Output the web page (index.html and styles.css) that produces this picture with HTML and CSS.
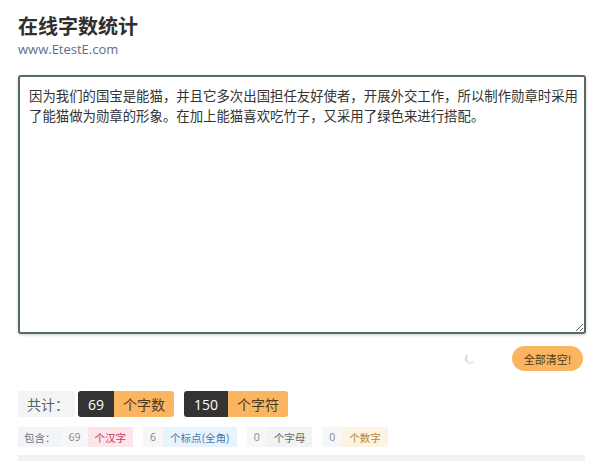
FILE: index.html
```html
<!DOCTYPE html>
<html lang="zh-CN">
<head>
    <meta charset="UTF-8">
    <meta name="viewport" content="width=device-width, initial-scale=1.0">
    <title>在线字数统计</title>
    <link rel="stylesheet" href="styles.css">
</head>
<body>
    <div class="page">
        <div class="header">
            <h1>在线字数统计</h1>
            <div class="site">www.EtestE.com</div>
        </div>

        <textarea class="input-box">因为我们的国宝是能猫，并且它多次出国担任友好使者，开展外交工作，所以制作勋章时采用了能猫做为勋章的形象。在加上能猫喜欢吃竹子，又采用了绿色来进行搭配。</textarea>

        <div class="actions">
            <span class="spinner"></span>
            <button class="clear-button">全部清空!</button>
        </div>

        <div class="total-row">
            <span class="total-label">共计：</span>
            <span class="num-box">69</span><span class="unit-box">个字数</span>
            <span class="num-box">150</span><span class="unit-box">个字符</span>
        </div>

        <div class="detail-row">
            <span class="detail-label">包含：</span>
            <span class="detail-num">69</span><span class="detail-unit hanzi">个汉字</span>
            <span class="detail-num">6</span><span class="detail-unit punct">个标点(全角)</span>
            <span class="detail-num">0</span><span class="detail-unit letter">个字母</span>
            <span class="detail-num">0</span><span class="detail-unit digit">个数字</span>
        </div>

        <div class="bottom-bar"></div>
    </div>
</body>
</html>
```

FILE: styles.css
```css
body {
    margin: 0;
    background-color: #fff;
    font-family: "Noto Sans CJK SC", "Liberation Sans", sans-serif;
    color: #333;
}
.page {
    padding: 12px 14px 0 18px;
}
.header h1 {
    margin: 0;
    font-size: 20px;
    font-weight: bold;
    line-height: 28px;
    color: #2f2f2f;
}
.site {
    font-family: "Open Sans", "Liberation Sans", sans-serif;
    font-size: 13px;
    line-height: 18px;
    color: #5d6f86;
}
.input-box {
    display: block;
    box-sizing: border-box;
    width: 568px;
    height: 259px;
    margin-top: 17px;
    padding: 8px 2px 8px 9px;
    border: 2px solid #58696b;
    border-radius: 3px;
    box-shadow: 0 1px 3px rgba(0, 0, 0, 0.2);
    font-family: "Noto Sans CJK SC", sans-serif;
    font-size: 13.4px;
    line-height: 20px;
    color: #333;
    resize: vertical;
    outline: none;
}
.actions {
    display: flex;
    justify-content: flex-end;
    align-items: center;
    gap: 36px;
    width: 565px;
    margin-top: 12px;
}
.spinner {
    width: 7px;
    height: 7px;
    border: 2px solid transparent;
    border-left-color: #d5d8dc;
    border-bottom-color: #e6e8ea;
    border-radius: 50%;
}
.clear-button {
    height: 25px;
    width: 71px;
    padding: 0;
    border: none;
    border-radius: 13px;
    background-color: #fbb560;
    color: #4a3a20;
    font-family: "Noto Sans CJK SC", sans-serif;
    font-size: 11px;
    cursor: pointer;
}
.total-row {
    display: flex;
    align-items: center;
    margin-top: 20px;
    height: 26px;
    font-size: 14px;
}
.total-label {
    display: flex;
    align-items: center;
    height: 26px;
    padding: 0 6px 0 9px;
    background-color: #f3f4f6;
    color: #606060;
    border-radius: 3px;
    margin-right: 3px;
}
.num-box {
    display: flex;
    align-items: center;
    height: 26px;
    padding: 0 10px;
    background-color: #333;
    color: #fff;
    font-family: "Open Sans", sans-serif;
    border-radius: 3px 0 0 3px;
}
.unit-box {
    display: flex;
    align-items: center;
    height: 26px;
    padding: 0 9px;
    background-color: #fbb560;
    color: #4a3a20;
    border-radius: 0 3px 3px 0;
    margin-right: 10px;
}
.detail-row {
    display: flex;
    align-items: center;
    margin-top: 10px;
    height: 20px;
    font-size: 10.5px;
}
.detail-label,
.detail-num,
.detail-unit {
    display: flex;
    align-items: center;
    height: 20px;
}
.detail-label {
    padding: 0 6px 0 6px;
    background-color: #f3f4f6;
    color: #707580;
}
.detail-num {
    padding: 0 7px;
    background-color: #f6f7f8;
    color: #888;
    font-family: "Open Sans", sans-serif;
}
.detail-unit {
    padding: 0 7px;
    margin-right: 10px;
}
.hanzi {
    background-color: #fde6ea;
    color: #c43a5c;
}
.punct {
    background-color: #e9f3fb;
    color: #3d7bb3;
}
.letter {
    background-color: #f2f3f5;
    color: #666;
}
.digit {
    background-color: #fdf3e2;
    color: #b5862c;
}
.bottom-bar {
    width: 567px;
    height: 10px;
    margin-top: 8px;
    background-color: #f1f2f3;
}
```
